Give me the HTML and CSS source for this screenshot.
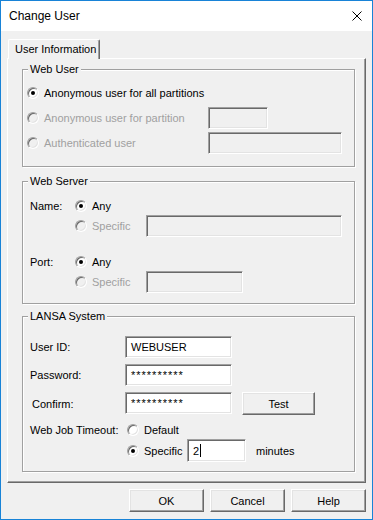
FILE: index.html
```html
<!DOCTYPE html>
<html lang="en">
<head>
  <meta charset="UTF-8" />
  <meta name="viewport" content="width=device-width, initial-scale=1.0"/>
  <title>Change User</title>
  <link rel="stylesheet" href="styles.css">
</head>
<body>
  <div class="window">
    <div class="titlebar">
      <span class="title">Change User</span>
      <svg class="close" viewBox="0 0 10 10">
        <path d="M0.5 0.5 L9.5 9.5 M9.5 0.5 L0.5 9.5" stroke="#000" stroke-width="1" fill="none"/>
      </svg>
    </div>

    <div class="client">
      <div class="tabs">
        <div class="tab">User Information</div>
      </div>

      <div class="panel">
        <!-- Web User -->
        <fieldset class="group">
          <legend>Web User</legend>
          <div class="user-grid">
            <label class="option wide"><span class="radio checked"></span>Anonymous user for all partitions</label>
            <label class="option disabled"><span class="radio"></span>Anonymous user for partition</label>
            <span class="field disabled partition-field"></span>
            <label class="option disabled"><span class="radio"></span>Authenticated user</label>
            <span class="field disabled"></span>
          </div>
        </fieldset>

        <!-- Web Server -->
        <fieldset class="group server">
          <legend>Web Server</legend>
          <div class="server-block">
            <span class="label">Name:</span>
            <label class="option any"><span class="radio checked"></span>Any</label>
            <label class="option disabled specific"><span class="radio"></span>Specific</label>
            <span class="field disabled"></span>
          </div>
          <div class="server-block port">
            <span class="label">Port:</span>
            <label class="option any"><span class="radio checked"></span>Any</label>
            <label class="option disabled specific"><span class="radio"></span>Specific</label>
            <span class="field disabled port-field"></span>
          </div>
        </fieldset>

        <!-- LANSA System -->
        <fieldset class="group lansa">
          <legend>LANSA System</legend>
          <div class="lansa-grid">
            <span class="label">User ID:</span>
            <span class="field">WEBUSER</span>
            <span></span>

            <span class="label">Password:</span>
            <span class="field secret">**********</span>
            <span></span>

            <span class="label confirm">Confirm:</span>
            <span class="field secret">**********</span>
            <button class="btn test">Test</button>

            <span class="label timeout-label">Web Job Timeout:</span>
            <div class="choices">
              <label class="option default"><span class="radio"></span>Default</label>
              <div class="choice-specific">
                <label class="option"><span class="radio checked"></span>Specific</label>
                <span class="field">2<span class="caret"></span></span>
                <span class="unit">minutes</span>
              </div>
            </div>
          </div>
        </fieldset>
      </div>

      <div class="buttons">
        <button class="btn">OK</button>
        <button class="btn">Cancel</button>
        <button class="btn">Help</button>
      </div>
    </div>
  </div>
</body>
</html>
```

FILE: styles.css
```css
* {
  box-sizing: border-box;
}

body {
  margin: 0;
  font-family: "Liberation Sans", Arial, sans-serif;
  font-size: 11px;
  color: #000;
  background: #fff;
}

.window {
  width: 373px;
  height: 520px;
  border: 1px solid #1883d7;
  display: flex;
  flex-direction: column;
  background: #f0f0f0;
}

.titlebar {
  flex: none;
  height: 30px;
  background: #fff;
  display: flex;
  align-items: center;
  justify-content: space-between;
  padding: 0 10px 0 8px;
}

.title {
  font-size: 12px;
}

.close {
  width: 10px;
  height: 10px;
}

.client {
  flex: 1;
  display: flex;
  flex-direction: column;
  padding: 8px 6px 7px 6px;
}

/* tab strip */
.tabs {
  display: flex;
  height: 19px;
  padding-left: 1px;
}

.tab {
  position: relative;
  z-index: 1;
  width: 92px;
  height: 20px;
  padding: 0 0 2px 6px;
  display: flex;
  align-items: center;
  background: #f0f0f0;
  border: 1px solid #fff;
  border-right-color: #696969;
  border-bottom: none;
  border-radius: 2px 2px 0 0;
  box-shadow: inset -1px 0 0 #a0a0a0;
}

.panel {
  height: 425px;
  padding: 4px 0 0 14px;
  border: 1px solid;
  border-color: #fff #696969 #696969 #fff;
  box-shadow: inset -1px -1px 0 #a0a0a0;
}

/* group boxes */
.group {
  width: 333px;
  margin: 0;
  padding: 0 0 0 4px;
  border: 1px solid #a0a0a0;
  box-shadow: inset 1px 1px 0 #fff, 1px 1px 0 #fff;
}

.group legend {
  margin-left: 1px;
  padding: 0 2px;
  line-height: 13px;
  background: #f0f0f0;
}

.group.server {
  margin-top: 8px;
}

.group.lansa {
  margin-top: 6px;
}

.label {
  display: flex;
  align-items: center;
}

.option {
  display: flex;
  align-items: center;
  gap: 5px;
  white-space: nowrap;
}

.option.disabled {
  color: #a0a0a0;
}

.radio {
  flex: none;
  width: 12px;
  height: 12px;
  border-radius: 50%;
  border: 1px solid;
  border-color: #a0a0a0 #fff #fff #a0a0a0;
  box-shadow: inset 1px 1px 0 #696969, inset -1px -1px 0 #e3e3e3;
  background: #fff;
  display: grid;
  place-items: center;
}

.option.disabled .radio {
  background: #f0f0f0;
}

.radio.checked::after {
  content: "";
  width: 4px;
  height: 4px;
  border-radius: 50%;
  background: #000;
}

.field {
  height: 22px;
  padding: 0 5px;
  display: flex;
  align-items: center;
  background: #fff;
  border: 1px solid;
  border-color: #a0a0a0 #fff #fff #a0a0a0;
  box-shadow: inset 1px 1px 0 #696969, inset -1px -1px 0 #e3e3e3;
}

.field.disabled {
  background: #f0f0f0;
}

.field.secret {
  letter-spacing: 1px;
}

.caret {
  display: inline-block;
  width: 1px;
  height: 13px;
  margin-left: 1px;
  background: #000;
}

.btn {
  width: 75px;
  height: 23px;
  padding: 0;
  font: inherit;
  color: #000;
  background: #f0f0f0;
  border: 1px solid;
  border-color: #fff #696969 #696969 #fff;
  box-shadow: inset -1px -1px 0 #a0a0a0, inset 1px 1px 0 #e3e3e3;
}

/* Web User */
.user-grid {
  display: grid;
  grid-template-columns: 181px 1fr;
  grid-auto-rows: 22px;
  row-gap: 3px;
  padding: 6px 0 12px;
}

.user-grid .wide {
  grid-column: 1 / -1;
}

.partition-field {
  width: 60px;
}

.user-grid .field {
  width: 134px;
}

.user-grid .partition-field {
  width: 60px;
}

/* Web Server */
.server-block {
  display: grid;
  grid-template-columns: 45px 71px 196px;
  grid-template-rows: 19px 22px;
  padding: 8px 0 0 3px;
}

.server-block .any {
  grid-column: 2 / -1;
}

.server-block .specific {
  grid-column: 2;
}

.server-block.port {
  padding-top: 15px;
  padding-bottom: 10px;
}

.server-block .port-field {
  width: 97px;
}

/* LANSA System */
.lansa-grid {
  display: grid;
  grid-template-columns: 95px 107px auto;
  grid-template-rows: 22px 22px 23px auto;
  row-gap: 6px;
  padding: 13px 0 9px 3px;
}

.label.confirm {
  padding-left: 2px;
}

.btn.test {
  width: 73px;
  margin-left: 10px;
}

.timeout-label {
  align-self: start;
  height: 18px;
}

.choices {
  grid-column: 2 / -1;
  padding-left: 2px;
}

.option.default {
  height: 18px;
}

.choice-specific {
  display: grid;
  grid-template-columns: 60px 59px auto;
  align-items: center;
  height: 23px;
}

.choice-specific .field {
  height: 23px;
  padding-left: 5px;
}

.unit {
  margin-left: 10px;
}

.buttons {
  display: flex;
  justify-content: flex-end;
  gap: 6px;
  margin-top: 6px;
}
```
